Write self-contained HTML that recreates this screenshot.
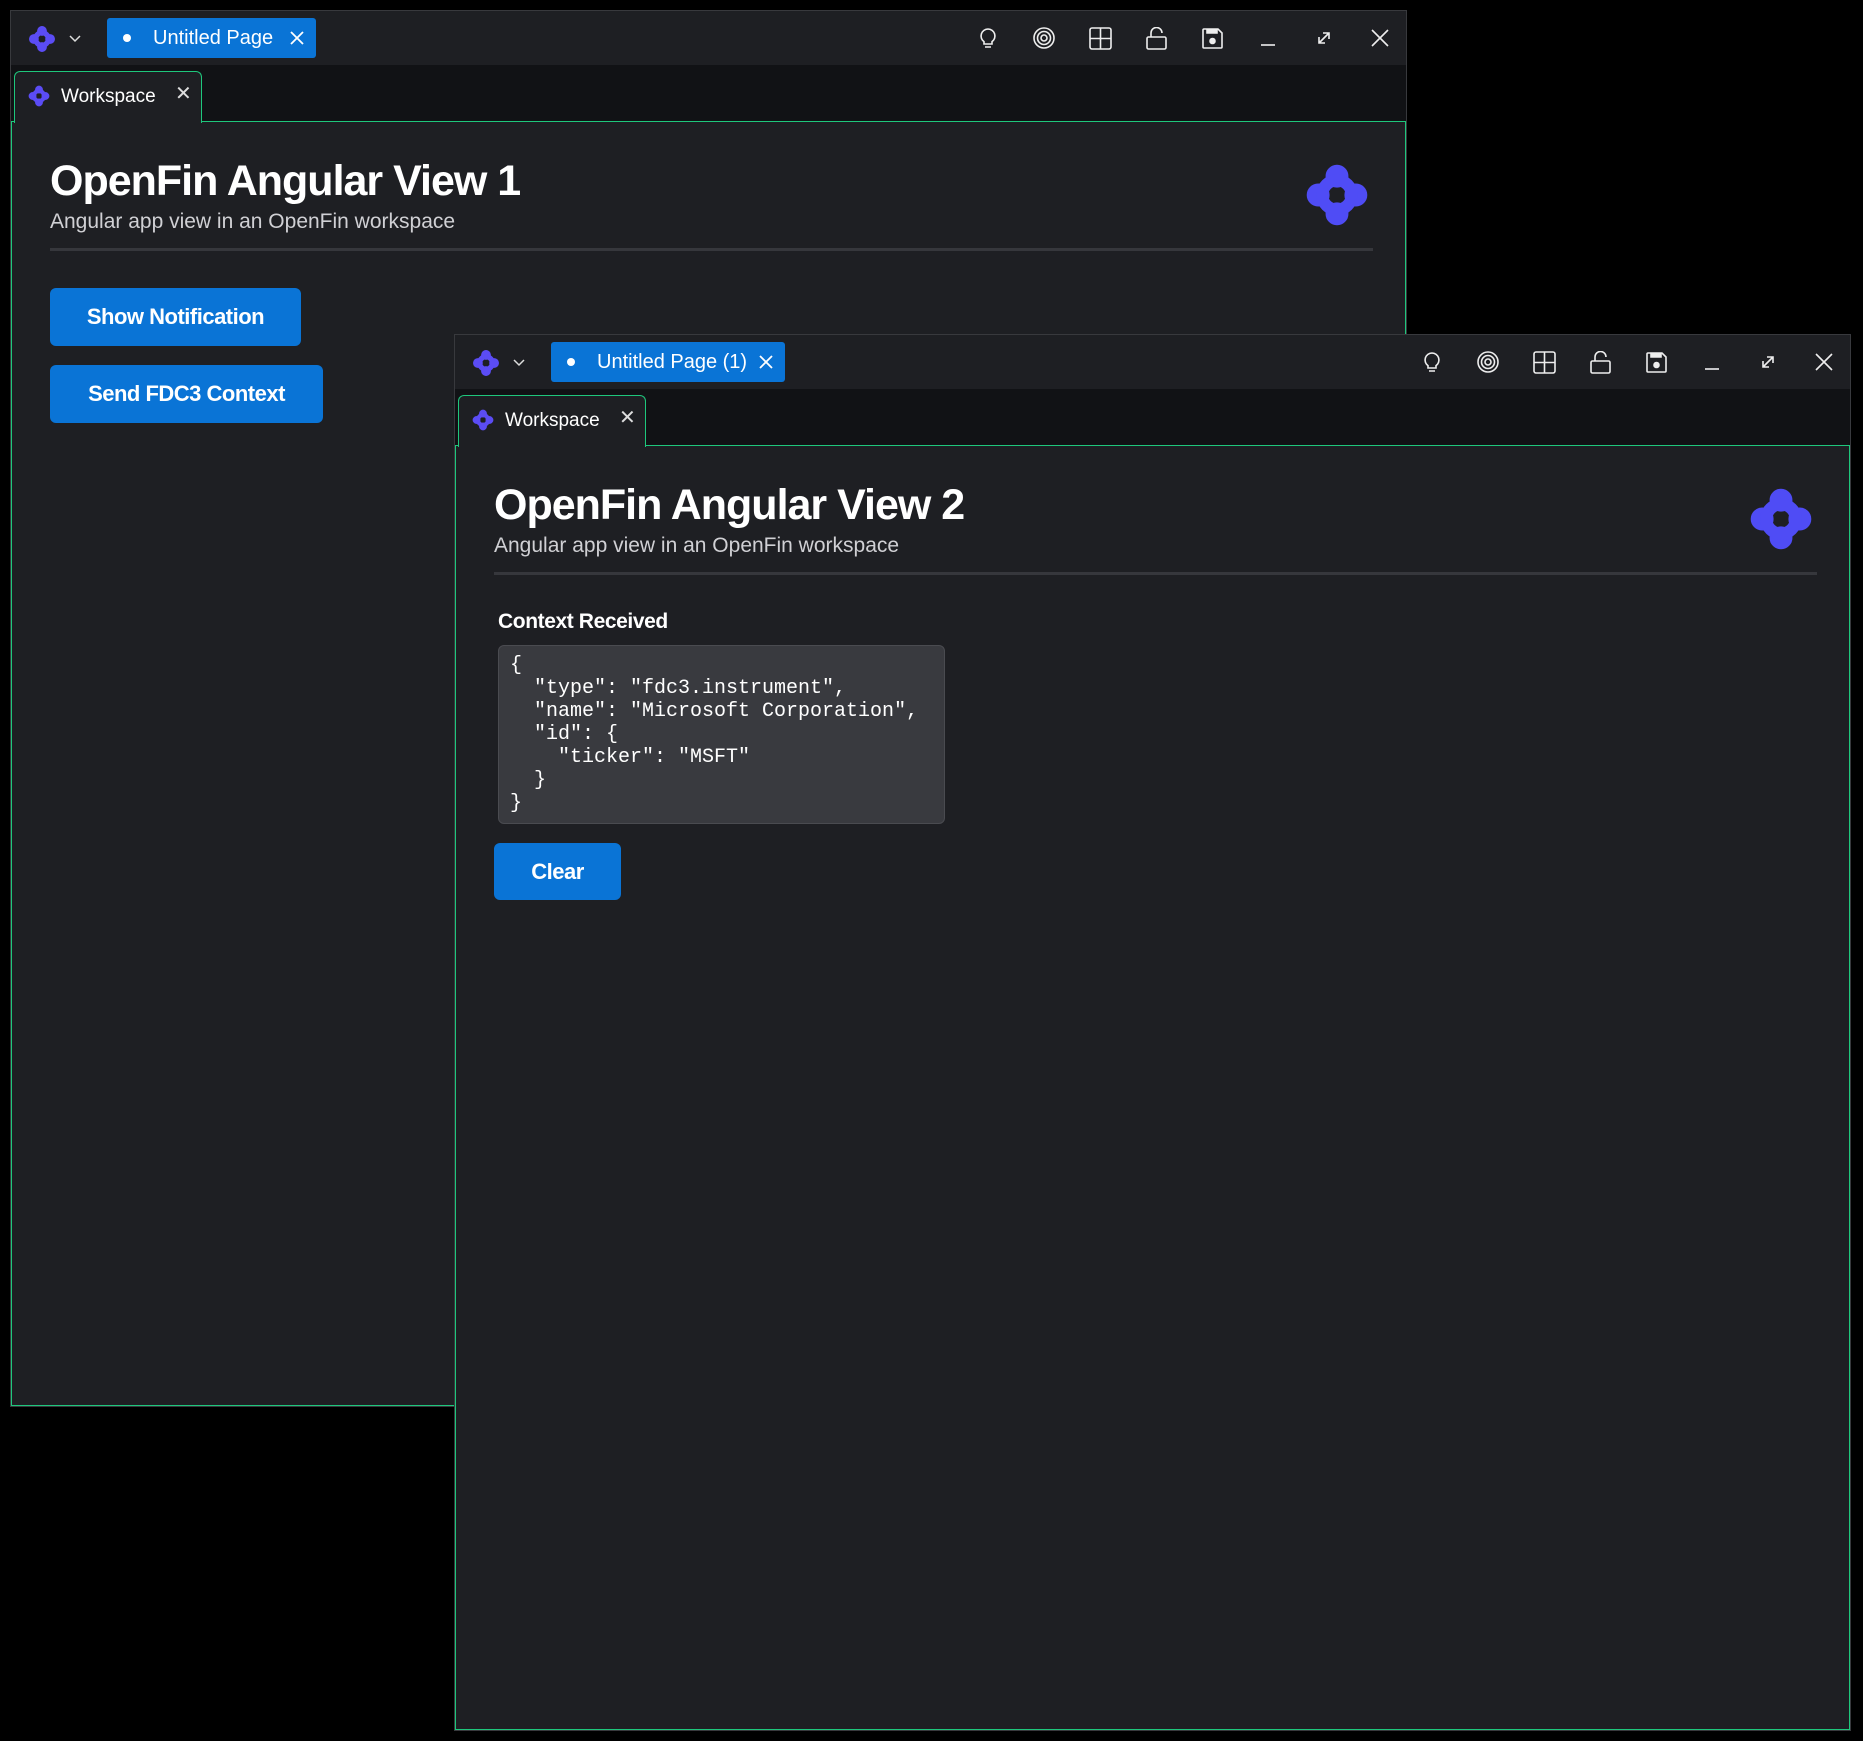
<!DOCTYPE html>
<html><head><meta charset="utf-8"><style>
*{margin:0;padding:0;box-sizing:border-box}
body{width:1863px;height:1741px;background:#000;position:relative;overflow:hidden;font-family:"Liberation Sans",Arial,sans-serif;color:#fff}
.win{position:absolute;width:1397px;height:1397px;border:1px solid #38393d;background:#1e1f23}
.tb{position:absolute;left:0;top:0;right:0;height:54px;background:#1e1f23}
.ts{position:absolute;left:0;top:54px;right:0;height:56px;background:#111215}
.ct{position:absolute;left:0;top:110px;right:0;bottom:0;border:1.5px solid #1ec77c;background:#1e1f23}
.wtab{position:absolute;left:3px;top:60px;width:188px;height:52px;border:1.5px solid #1ec77c;border-bottom:none;border-radius:6px 6px 0 0;background:#1e1f23;z-index:2}
.wtab span{position:absolute;left:46px;top:14px;font-size:19px;color:#fff}
.wtab .x{position:absolute;left:160px;top:9px;font-size:20px;color:#ddd}
.btab{position:absolute;top:7px;left:96px;height:40px;background:#0a74d6;border-radius:3px}
.btab .dot{position:absolute;left:16px;top:16px;width:8px;height:8px;border-radius:50%;background:#fff}
.btab .t{position:absolute;left:46px;top:9px;font-size:20px}
h1{position:absolute;left:38px;top:38px;font-size:43px;font-weight:600;letter-spacing:-1px;line-height:1}
.sub{position:absolute;left:38px;top:88px;font-size:21px;color:#d0d0d4}
.hr{position:absolute;left:38px;width:1323px;top:126px;height:3px;background:#36373c}
.btn{position:absolute;left:38px;height:58px;background:#0a74d6;border-radius:6px;font-weight:bold;font-size:22px;color:#fff;text-align:center;line-height:58px;letter-spacing:-0.5px}
.biglogo{position:absolute;left:1290px;top:38px}
.code{position:absolute;left:42px;top:199px;width:447px;height:179px;background:#393a3f;border:1px solid #4a4b50;border-radius:6px;font-family:"Liberation Mono",monospace;font-size:20px;line-height:23px;color:#fff;padding:8px 11px;white-space:pre}
</style></head><body>

<svg width="0" height="0" style="position:absolute"><defs>
<g id="logo"><circle cx="0" cy="-14" r="8"/><circle cx="-14" cy="0" r="8"/><circle cx="14" cy="0" r="8"/><circle cx="0" cy="14" r="8"/><circle cx="0" cy="0" r="11" fill="none" stroke-width="9"/></g>
<g id="icons" fill="none" stroke="#eee" stroke-width="1.6">
<g transform="translate(0,0)"><path d="M11 2a7 7 0 0 0-4 12.7V17h8v-2.3A7 7 0 0 0 11 2zM8 20h6"/></g>
<g transform="translate(56,0)"><circle cx="11" cy="11" r="10"/><circle cx="11" cy="11" r="6.5"/><circle cx="11" cy="11" r="3"/></g>
<g transform="translate(112,0)"><rect x="1" y="1" width="21" height="21" rx="2"/><path d="M11.5 1v21M1 11.5h21"/></g>
<g transform="translate(168,0)"><rect x="2" y="10" width="19" height="12" rx="1.5"/><path d="M6 10V6a5.5 5.5 0 0 1 11 0"/></g>
<g transform="translate(224,0)"><path d="M2 3a1 1 0 0 1 1-1h14l4 4v14a1 1 0 0 1-1 1H3a1 1 0 0 1-1-1z"/><path d="M6 2v4h10V2" fill="#eee"/><circle cx="11.5" cy="14" r="2.5" fill="#eee"/></g>
<g transform="translate(281,0)"><path d="M3 18h14"/></g>
<g transform="translate(336,0)"><path d="M6 16l10-10M10 6h6v6M6 10v6h6"/></g>
<g transform="translate(392,0)"><path d="M3 3l16 16M19 3L3 19"/></g>
</g>
</defs></svg>

<!-- Window 1 -->
<div class="win" style="left:10px;top:10px">
 <div class="tb">
  <svg style="position:absolute;left:16px;top:13px" width="30" height="30" viewBox="-26 -26 52 52" fill="#5b4cf5" stroke="#5b4cf5"><use href="#logo"/></svg>
  <svg style="position:absolute;left:57px;top:23px" width="14" height="10"><path d="M2 2l5 5 5-5" fill="none" stroke="#ddd" stroke-width="1.5"/></svg>
  <div class="btab" style="width:209px"><div class="dot"></div><div class="t">Untitled Page</div>
   <svg style="position:absolute;left:183px;top:13px" width="14" height="14"><path d="M1 1l12 12M13 1L1 13" stroke="#fff" stroke-width="1.8"/></svg></div>
  <svg style="position:absolute;left:966px;top:16px" width="420" height="24"><use href="#icons"/></svg>
 </div>
 <div class="ts"></div>
 <div class="ct">
  <h1>OpenFin Angular View 1</h1>
  <div class="sub">Angular app view in an OpenFin workspace</div>
  <div class="hr"></div>
  <svg class="biglogo" width="70" height="70" viewBox="-26 -26 52 52" fill="#4f4cf5" stroke="#4f4cf5"><use href="#logo"/></svg>
  <div class="btn" style="top:166px;width:251px">Show Notification</div>
  <div class="btn" style="top:243px;width:273px">Send FDC3 Context</div>
 </div>
 <div class="wtab">
  <svg style="position:absolute;left:12px;top:12px" width="24" height="24" viewBox="-26 -26 52 52" fill="#5b4cf5" stroke="#5b4cf5"><use href="#logo"/></svg>
  <span>Workspace</span><span class="x">✕</span>
 </div>
</div>

<!-- Window 2 -->
<div class="win" style="left:454px;top:334px">
 <div class="tb">
  <svg style="position:absolute;left:16px;top:13px" width="30" height="30" viewBox="-26 -26 52 52" fill="#5b4cf5" stroke="#5b4cf5"><use href="#logo"/></svg>
  <svg style="position:absolute;left:57px;top:23px" width="14" height="10"><path d="M2 2l5 5 5-5" fill="none" stroke="#ddd" stroke-width="1.5"/></svg>
  <div class="btab" style="width:234px"><div class="dot"></div><div class="t">Untitled Page (1)</div>
   <svg style="position:absolute;left:208px;top:13px" width="14" height="14"><path d="M1 1l12 12M13 1L1 13" stroke="#fff" stroke-width="1.8"/></svg></div>
  <svg style="position:absolute;left:966px;top:16px" width="420" height="24"><use href="#icons"/></svg>
 </div>
 <div class="ts"></div>
 <div class="ct">
  <h1>OpenFin Angular View 2</h1>
  <div class="sub">Angular app view in an OpenFin workspace</div>
  <div class="hr"></div>
  <svg class="biglogo" width="70" height="70" viewBox="-26 -26 52 52" fill="#4f4cf5" stroke="#4f4cf5"><use href="#logo"/></svg>
  <div style="position:absolute;left:42px;top:164px;font-size:21px;font-weight:bold;letter-spacing:-0.4px">Context Received</div>
  <div class="code">{
  "type": "fdc3.instrument",
  "name": "Microsoft Corporation",
  "id": {
    "ticker": "MSFT"
  }
}</div>
  <div class="btn" style="top:397px;width:127px;height:57px;line-height:57px">Clear</div>
 </div>
 <div class="wtab">
  <svg style="position:absolute;left:12px;top:12px" width="24" height="24" viewBox="-26 -26 52 52" fill="#5b4cf5" stroke="#5b4cf5"><use href="#logo"/></svg>
  <span>Workspace</span><span class="x">✕</span>
 </div>
</div>

</body></html>
